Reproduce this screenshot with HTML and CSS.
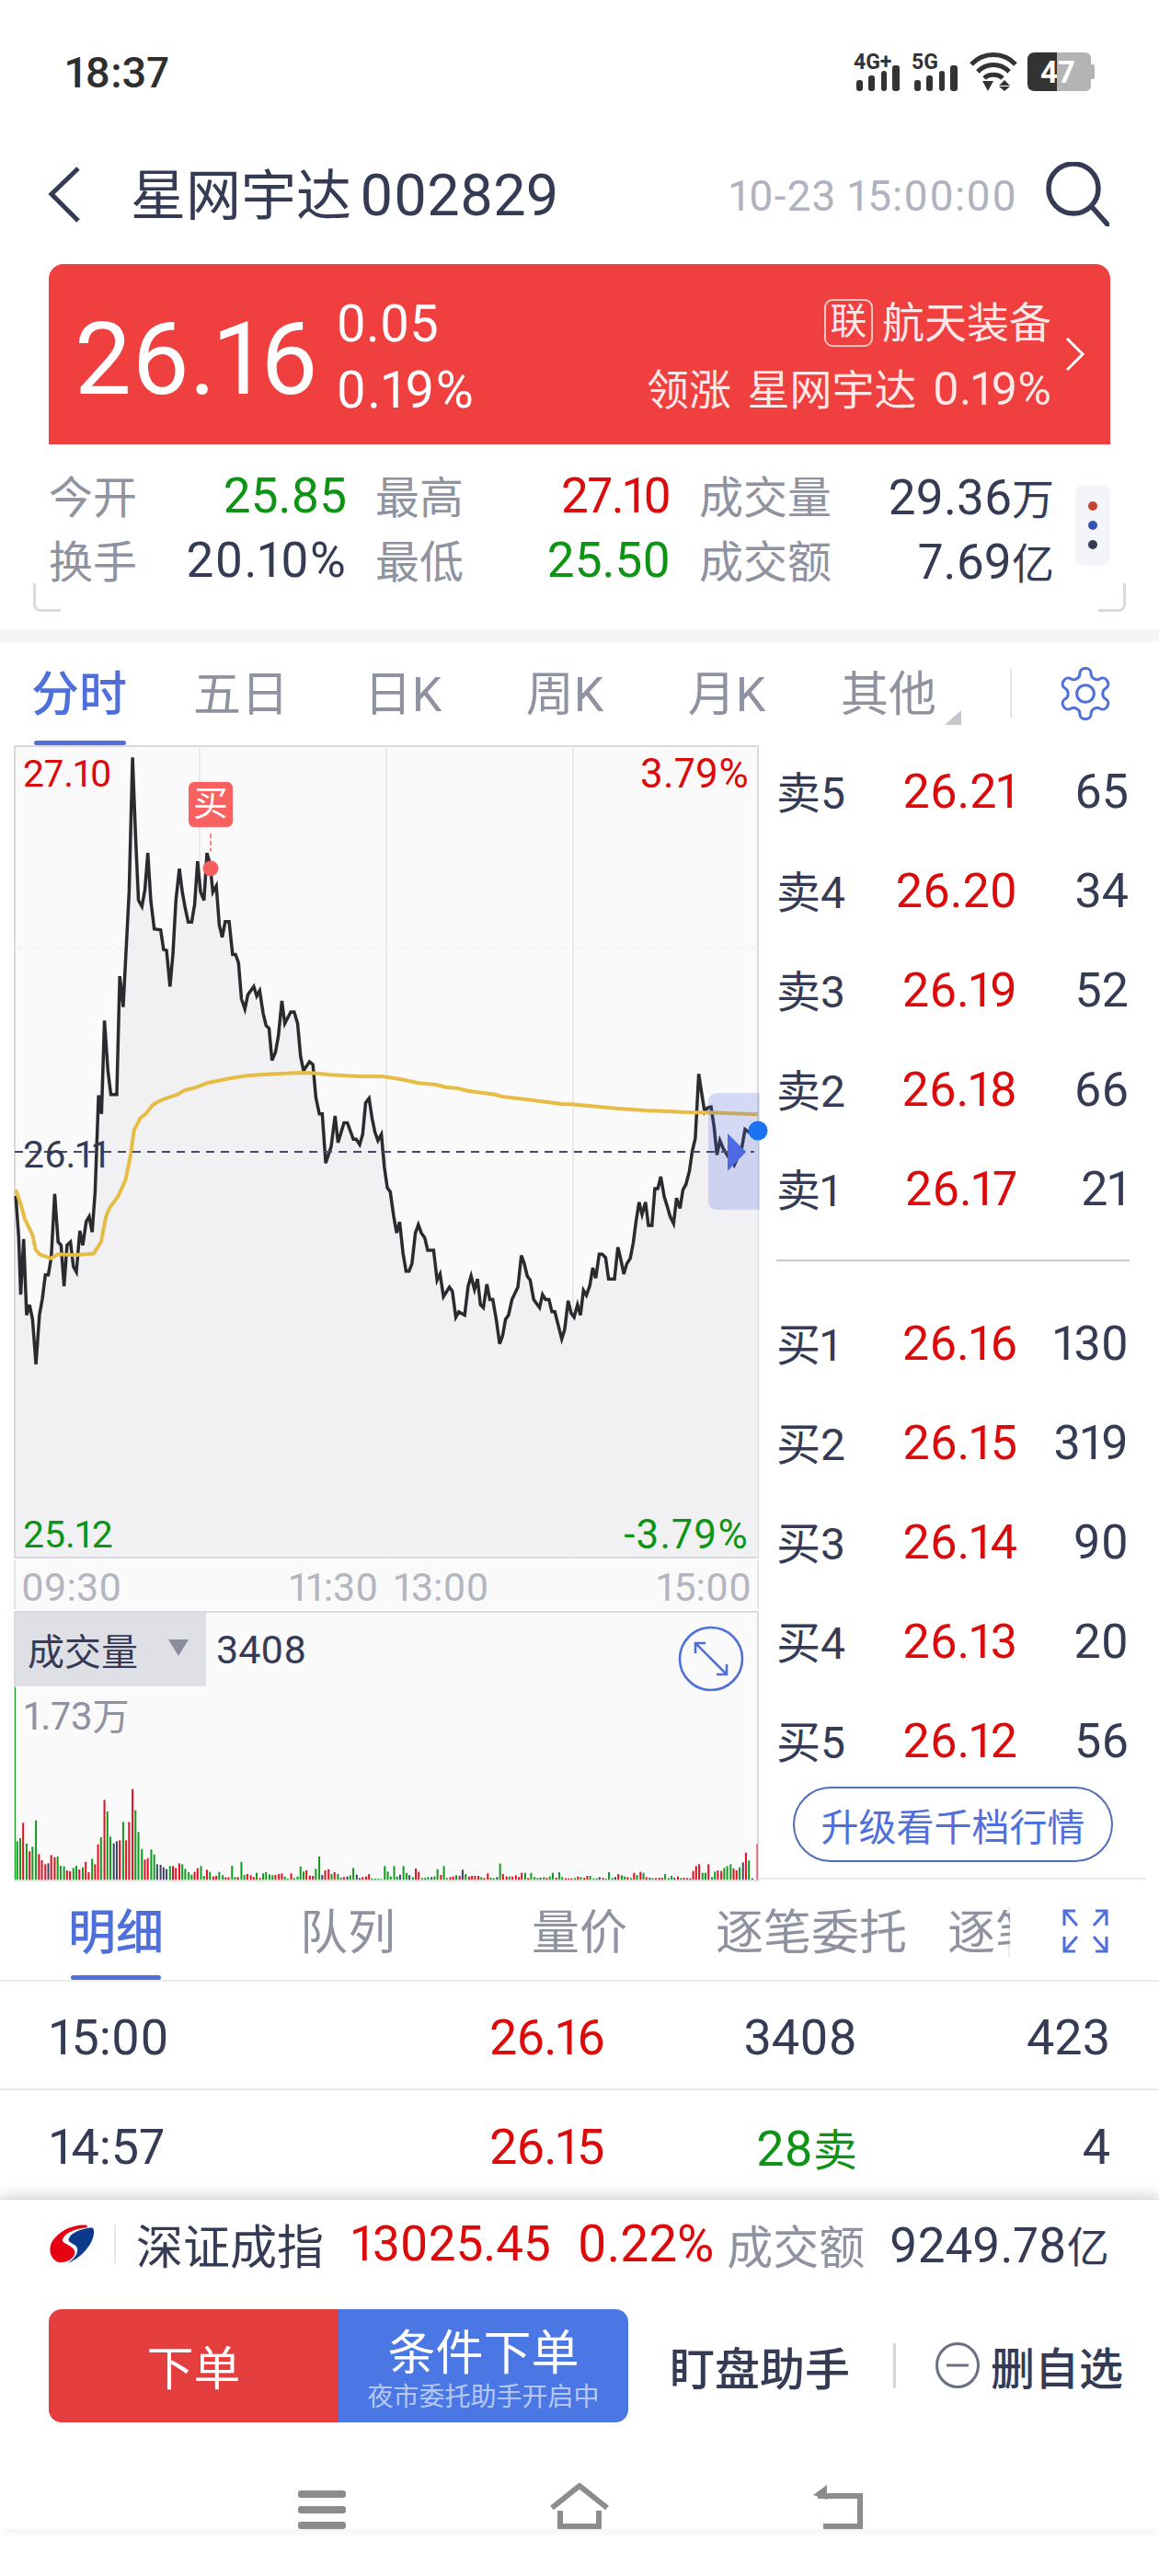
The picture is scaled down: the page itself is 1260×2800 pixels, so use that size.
FILE: index.html
```html
<!DOCTYPE html>
<html lang="zh-CN">
<head>
<meta charset="utf-8">
<title>星网宇达 002829</title>
<link rel="stylesheet" href="styles.css">
</head>
<body>
<div class="page">

<div class="status">
  <span class="clock">18:37</span>
  <div class="status-icons">
    <svg class="sig" width="52" height="42" viewBox="0 0 52 42"><text class="sig-text" x="0" y="18">4G+</text><rect x="3" y="30" width="7" height="12" rx="3"/><rect x="16" y="25" width="7" height="17" rx="3"/><rect x="30" y="20" width="6" height="22" rx="3"/><rect x="42" y="14" width="8" height="28" rx="3"/></svg>
    <svg class="sig" width="52" height="42" viewBox="0 0 52 42"><text class="sig-text" x="0" y="18">5G</text><rect x="3" y="30" width="7" height="12" rx="3"/><rect x="16" y="25" width="7" height="17" rx="3"/><rect x="30" y="20" width="6" height="22" rx="3"/><rect x="42" y="14" width="8" height="28" rx="3"/></svg>
    <svg class="wifi" width="52" height="42" viewBox="0 0 52 42"><path class="wifi-arc" d="M2 13C15 -1 37 -1 50 13"/><path class="wifi-arc" d="M9 21C18 11 34 11 43 21"/><path class="wifi-arc" d="M16 28C21 23 31 23 36 28"/><path class="wifi-fill" d="M14 31H26L20 42ZM38 30L44 36H32ZM32 37H44L38 42Z"/></svg>
    <svg class="batt" width="73" height="42" viewBox="0 0 73 42"><path class="batt-rest" d="M32 0H62Q69 0 69 6V13H71Q73 13 73 15V27Q73 29 71 29H69V36Q69 42 62 42H32Z"/><path class="batt-used" d="M8 0H32V42H8Q0 42 0 34V8Q0 0 8 0Z"/><text class="batt-text" x="14" y="33">47</text></svg>
  </div>
</div>

<header class="head">
  <svg class="back" width="36" height="63" viewBox="0 0 36 63"><path d="M33 3L4 31L33 60"/></svg>
  <h1 class="title">星网宇达<span class="code">002829</span></h1>
  <span class="stamp">10-23 15:00:00</span>
  <svg class="search" width="70" height="70" viewBox="0 0 70 70"><circle cx="31" cy="29" r="27"/><path d="M52 50L68 68"/></svg>
</header>

<section class="hero">
  <div class="hero-price">26.16</div>
  <div class="hero-chg"><div>0.05</div><div class="hero-pct">0.19%</div></div>
  <div class="hero-side">
    <div class="hero-line"><span class="tag">联</span>航天装备</div>
    <div class="hero-line hero-lead">领涨 星网宇达 <span class="lead-pct">0.19%</span></div>
  </div>
  <svg class="hero-arrow" width="22" height="38" viewBox="0 0 22 38"><path d="M2 2L19 19L2 36"/></svg>
</section>

<section class="stats">
  <div class="stats-grid">
    <div class="cell"><span class="lbl">今开</span><span class="val green">25.85</span></div>
    <div class="cell"><span class="lbl">最高</span><span class="val val-tight red">27.10</span></div>
    <div class="cell"><span class="lbl">成交量</span><span class="val">29.36<span class="unit">万</span></span></div>
    <div class="cell"><span class="lbl">换手</span><span class="val val-wide">20.10%</span></div>
    <div class="cell"><span class="lbl">最低</span><span class="val green">25.50</span></div>
    <div class="cell"><span class="lbl">成交额</span><span class="val">7.69<span class="unit">亿</span></span></div>
  </div>
  <div class="dots"><i class="dot dot-r"></i><i class="dot dot-b"></i><i class="dot dot-k"></i></div>
</section>
<div class="brackets"><i class="br br-l"></i><i class="br br-r"></i></div>
<div class="band"></div>

<nav class="tabs">
  <div class="tab-grid">
    <span class="tab on">分时</span><span class="tab">五日</span><span class="tab">日K</span><span class="tab">周K</span><span class="tab">月K</span><span class="tab more">其他</span>
  </div>
  <i class="tab-sep"></i>
  <svg class="gear" width="66" height="66" viewBox="0 0 24 24"><path d="M12.22 2h-.44a2 2 0 0 0-2 2v.18a2 2 0 0 1-1 1.73l-.43.25a2 2 0 0 1-2 0l-.15-.08a2 2 0 0 0-2.73.73l-.22.38a2 2 0 0 0 .73 2.73l.15.1a2 2 0 0 1 1 1.72v.51a2 2 0 0 1-1 1.74l-.15.09a2 2 0 0 0-.73 2.73l.22.38a2 2 0 0 0 2.73.73l.15-.08a2 2 0 0 1 2 0l.43.25a2 2 0 0 1 1 1.73V20a2 2 0 0 0 2 2h.44a2 2 0 0 0 2-2v-.18a2 2 0 0 1 1-1.73l.43-.25a2 2 0 0 1 2 0l.15.08a2 2 0 0 0 2.73-.73l.22-.39a2 2 0 0 0-.73-2.73l-.15-.08a2 2 0 0 1-1-1.74v-.5a2 2 0 0 1 1-1.74l.15-.09a2 2 0 0 0 .73-2.73l-.22-.38a2 2 0 0 0-2.73-.73l-.15.08a2 2 0 0 1-2 0l-.43-.25a2 2 0 0 1-1-1.73V4a2 2 0 0 0-2-2z"/><circle cx="12" cy="12" r="3.4"/></svg>
</nav>

<div class="market">
  <div class="charts">
    <div class="price-chart">
      <svg class="price-svg" width="810" height="882" viewBox="15 811 810 882">
        <path class="grid-v" d="M217 811V1693M420 811V1693M623 811V1693"/>
        <path class="grid-h" d="M16 1031H824"/>
        <g transform="translate(0 800) scale(.5357 .4464)">
          <polygon class="area" points="32,1998 32,1120 38,1220 42,1360 48,1225 54,1410 60,1385 66,1420 73,1530 80,1410 86,1370 92,1312 98,1312 104,1270 111,1115 118,1232 124,1240 130,1340 136,1240 143,1232 149,1292 155,1305 162,1205 168,1240 175,1182 181,1170 187,1208 193,1110 200,875 206,920 212,693 219,815 225,873 237,873 243,585 250,660 256,520 262,380 269,52 275,240 281,400 288,415 294,375 300,285 306,400 313,470 326,472 332,520 338,522 345,610 351,530 357,400 364,323 370,380 376,420 382,453 389,453 395,410 401,305 407,380 414,400 420,285 426,310 432,380 439,365 445,460 451,490 457,452 465,452 472,532 478,532 484,552 490,640 497,665 503,630 515,610 521,633 527,620 534,675 540,705 546,712 552,790 559,770 565,730 572,645 578,700 590,672 597,672 604,700 610,780 616,815 628,793 635,800 641,880 648,920 654,920 661,1040 672,1000 680,925 686,990 698,942 705,942 717,982 723,982 730,995 736,970 742,893 749,882 755,930 761,965 767,985 774,970 780,1050 786,1100 792,1110 799,1170 805,1210 811,1183 818,1260 824,1303 830,1303 836,1285 843,1210 849,1190 855,1210 862,1222 868,1252 880,1252 887,1325 893,1310 900,1365 912,1342 918,1352 925,1415 931,1402 943,1410 950,1340 956,1315 963,1348 969,1322 975,1385 981,1392 988,1335 994,1372 1000,1372 1007,1420 1014,1480 1020,1460 1026,1420 1032,1410 1039,1372 1051,1342 1058,1265 1064,1285 1070,1315 1076,1325 1083,1372 1095,1392 1101,1360 1107,1372 1114,1372 1120,1402 1126,1402 1140,1468 1146,1445 1153,1375 1159,1405 1165,1415 1172,1385 1178,1410 1184,1350 1190,1362 1197,1338 1203,1295 1209,1320 1216,1262 1222,1262 1229,1270 1235,1322 1247,1322 1254,1245 1260,1275 1266,1310 1272,1285 1279,1272 1285,1235 1291,1180 1297,1135 1303,1165 1310,1135 1316,1192 1323,1192 1329,1102 1335,1102 1341,1073 1348,1122 1354,1145 1360,1170 1367,1187 1373,1125 1380,1150 1386,1105 1392,1092 1399,1060 1405,1010 1411,980 1418,823 1424,870 1430,915 1436,905 1443,903 1449,950 1455,1020 1461,985 1468,1005 1478,1025 1490,1045 1505,1005 1512,958 1520,965 1538,962 1538,1998"/>
          <polyline class="price" points="32,1120 38,1220 42,1360 48,1225 54,1410 60,1385 66,1420 73,1530 80,1410 86,1370 92,1312 98,1312 104,1270 111,1115 118,1232 124,1240 130,1340 136,1240 143,1232 149,1292 155,1305 162,1205 168,1240 175,1182 181,1170 187,1208 193,1110 200,875 206,920 212,693 219,815 225,873 237,873 243,585 250,660 256,520 262,380 269,52 275,240 281,400 288,415 294,375 300,285 306,400 313,470 326,472 332,520 338,522 345,610 351,530 357,400 364,323 370,380 376,420 382,453 389,453 395,410 401,305 407,380 414,400 420,285 426,310 432,380 439,365 445,460 451,490 457,452 465,452 472,532 478,532 484,552 490,640 497,665 503,630 515,610 521,633 527,620 534,675 540,705 546,712 552,790 559,770 565,730 572,645 578,700 590,672 597,672 604,700 610,780 616,815 628,793 635,800 641,880 648,920 654,920 661,1040 672,1000 680,925 686,990 698,942 705,942 717,982 723,982 730,995 736,970 742,893 749,882 755,930 761,965 767,985 774,970 780,1050 786,1100 792,1110 799,1170 805,1210 811,1183 818,1260 824,1303 830,1303 836,1285 843,1210 849,1190 855,1210 862,1222 868,1252 880,1252 887,1325 893,1310 900,1365 912,1342 918,1352 925,1415 931,1402 943,1410 950,1340 956,1315 963,1348 969,1322 975,1385 981,1392 988,1335 994,1372 1000,1372 1007,1420 1014,1480 1020,1460 1026,1420 1032,1410 1039,1372 1051,1342 1058,1265 1064,1285 1070,1315 1076,1325 1083,1372 1095,1392 1101,1360 1107,1372 1114,1372 1120,1402 1126,1402 1140,1468 1146,1445 1153,1375 1159,1405 1165,1415 1172,1385 1178,1410 1184,1350 1190,1362 1197,1338 1203,1295 1209,1320 1216,1262 1222,1262 1229,1270 1235,1322 1247,1322 1254,1245 1260,1275 1266,1310 1272,1285 1279,1272 1285,1235 1291,1180 1297,1135 1303,1165 1310,1135 1316,1192 1323,1192 1329,1102 1335,1102 1341,1073 1348,1122 1354,1145 1360,1170 1367,1187 1373,1125 1380,1150 1386,1105 1392,1092 1399,1060 1405,1010 1411,980 1418,823 1424,870 1430,915 1436,905 1443,903 1449,950 1455,1020 1461,985 1468,1005 1478,1025 1490,1045 1505,1005 1512,958 1520,965 1538,962"/>
          <polyline class="avg" points="32,1105 42,1140 50,1175 66,1215 72,1250 80,1262 104,1272 118,1262 150,1264 190,1260 205,1232 215,1170 222,1150 240,1120 255,1080 265,1020 272,960 285,930 296,920 310,898 330,885 360,873 375,862 395,857 420,845 460,835 500,827 550,823 610,820 640,821 670,825 730,829 775,829 810,835 850,845 885,849 905,855 930,858 950,864 1005,873 1020,878 1090,888 1140,896 1165,897 1255,907 1310,912 1410,917 1440,917 1538,921"/>
        </g>
        <path class="ref" d="M16 1252H820"/>
        <path class="panel" d="M826 1188H780Q770 1188 770 1198V1305Q770 1315 780 1315H826Z"/>
        <path class="panel-arrow" d="M791 1232L811 1252L791 1273Z"/>
        <circle class="now" cx="824" cy="1229" r="10.5"/>
        <path class="trade-line" d="M229 906V925"/>
        <circle class="trade-dot" cx="229" cy="944" r="8.5"/>
      </svg>
      <span class="tick tick-tl red">27.10</span>
      <span class="tick tick-tr red">3.79%</span>
      <span class="tick tick-mid">26.11</span>
      <span class="tick tick-bl green">25.12</span>
      <span class="tick tick-br green">-3.79%</span>
      <span class="trade-tag">买</span>
    </div>
    <div class="axis"><span>09:30</span><span class="axis-mid"><span>11:30</span><span>13:00</span></span><span>15:00</span></div>
    <div class="vol">
      <div class="vol-head">
        <div class="vol-pick">成交量<i class="vol-caret"></i></div>
        <span class="vol-now">3408</span>
        <svg class="vol-expand" width="72" height="72" viewBox="0 0 72 72"><circle cx="36" cy="36" r="34"/><path d="M19 19L53 53M19 30V19H30M53 42V53H42"/></svg>
      </div>
      <div class="vol-plot">
        <svg id="volbars" class="vol-svg" width="810" height="210" viewBox="15 1833 810 210"></svg>
        <span class="vol-max">1.73<span class="vol-unit">万</span></span>
      </div>
    </div>
  </div>
  <aside class="book">
    <div class="row"><span class="side">卖5</span><span class="px">26.21</span><span class="qty">65</span></div>
    <div class="row"><span class="side">卖4</span><span class="px">26.20</span><span class="qty">34</span></div>
    <div class="row"><span class="side">卖3</span><span class="px">26.19</span><span class="qty">52</span></div>
    <div class="row"><span class="side">卖2</span><span class="px">26.18</span><span class="qty">66</span></div>
    <div class="row"><span class="side">卖1</span><span class="px">26.17</span><span class="qty">21</span></div>
    <div class="book-sep"></div>
    <div class="row"><span class="side">买1</span><span class="px">26.16</span><span class="qty">130</span></div>
    <div class="row"><span class="side">买2</span><span class="px">26.15</span><span class="qty">319</span></div>
    <div class="row"><span class="side">买3</span><span class="px">26.14</span><span class="qty">90</span></div>
    <div class="row"><span class="side">买4</span><span class="px">26.13</span><span class="qty">20</span></div>
    <div class="row"><span class="side">买5</span><span class="px">26.12</span><span class="qty">56</span></div>
    <button class="upgrade">升级看千档行情</button>
    <div class="book-end"></div>
  </aside>
</div>

<nav class="sub">
  <div class="sub-tabs">
    <span class="sub-tab on">明细</span><span class="sub-tab">队列</span><span class="sub-tab">量价</span><span class="sub-tab">逐笔委托</span><span class="sub-tab sub-clip">逐笔成交</span>
  </div>
  <svg class="sub-expand" width="50" height="48" viewBox="0 0 50 48"><path d="M2 18V2H14M2 2L16 18M48 18V2H36M48 2L34 18M2 30V46H14M2 46L16 30M48 30V46H36M48 46L34 30"/></svg>
</nav>

<div class="deals">
  <div class="deal"><span>15:00</span><span class="deal-px red">26.16</span><span class="num">3408</span><span class="num">423</span></div>
  <div class="deal"><span>14:57</span><span class="deal-px red">26.15</span><span class="num green">28<span class="deal-unit">卖</span></span><span class="num">4</span></div>
</div>

<div class="bottom">
  <div class="quote">
    <svg class="logo" width="50" height="44" viewBox="40 35 150 132"><path class="logo-r" d="M165 40C120 35 70 60 50 95C38 120 45 150 70 160C95 165 125 150 125 128C125 110 95 105 85 92C85 70 120 52 165 48Z"/><path class="logo-b" d="M180 48C190 50 190 70 180 92C170 115 140 150 100 165C125 150 137 130 133 115C128 100 108 100 104 88C108 68 140 52 180 48Z"/></svg>
    <i class="quote-sep"></i>
    <span class="q-name">深证成指</span>
    <span class="q-val red">13025.45</span>
    <span class="q-pct red">0.22%</span>
    <span class="q-lbl">成交额</span>
    <span class="q-amt">9249.78<span class="unit">亿</span></span>
  </div>
  <div class="actions">
    <div class="trade">
      <div class="btn-buy">下单</div>
      <div class="btn-cond"><span class="cond-main">条件下单</span><span class="cond-sub">夜市委托助手开启中</span></div>
    </div>
    <span class="watch">盯盘助手</span>
    <i class="act-sep"></i>
    <svg class="minus" width="48" height="50" viewBox="0 0 48 50"><ellipse cx="24" cy="25" rx="22.5" ry="23.5"/><path d="M12 25H36"/></svg>
    <span class="remove">删自选</span>
  </div>
  <div class="navbar">
    <svg class="nav-menu" width="52" height="42" viewBox="0 0 52 42"><rect y="0" width="52" height="8" rx="3"/><rect y="17" width="52" height="8" rx="3"/><rect y="34" width="52" height="8" rx="3"/></svg>
    <svg class="nav-home" width="66" height="50" viewBox="0 0 66 50"><path d="M3 27L33 3L63 27M12 30V47H54V30"/></svg>
    <svg class="nav-back" width="56" height="48" viewBox="0 0 56 48"><path class="nav-stroke" d="M6 12H52V45H12"/><path class="nav-head" d="M16 0L1 11L16 16Z"/></svg>
  </div>
</div>

</div>
<script src="chart.js"></script>
</body>
</html>
```

FILE: styles.css
```css
* { box-sizing: border-box; }
html, body { margin: 0; padding: 0; background: #fff; }
body { font-family: Roboto, "Noto Sans CJK SC", sans-serif; color: #353b55; font-variant-numeric: proportional-nums; }
.page { width: 1260px; height: 2800px; overflow: hidden; position: relative; background: #fff; }
.red { color: #dc0a0a; }
.green { color: #0d9414; }
.unit { font-size: 46px; }

/* status */
.status { height: 156px; display: flex; align-items: center; justify-content: space-between; padding: 0 70px 0 71px; }
.clock { font-size: 47px; font-weight: 500; color: #2e2e2e; }
.status-icons { display: flex; gap: 11px; align-items: center; }
.status-icons svg { display: block; overflow: visible; }
.sig rect { fill: #333; }
.sig-text { font: 700 23px Roboto, sans-serif; fill: #333; }
.wifi-arc { fill: none; stroke: #333; stroke-width: 5; }
.wifi-fill { fill: #333; }
.batt-rest { fill: #b4b4b4; }
.batt-used { fill: #333; }
.batt-text { font: 700 33px Roboto, sans-serif; fill: #fff; }

/* header */
.head { height: 110px; margin-bottom: 21px; display: flex; align-items: center; padding: 0 54px 0 52px; }
.back { fill: none; stroke: #353b55; stroke-width: 5; margin-right: 54px; }
.title { margin: 3px 0 0; font-size: 60px; font-weight: 400; line-height: 1; color: #353b55; }
.code { font-size: 63px; margin-left: 9px; }
.stamp { margin: 4px 30px 0 auto; font-size: 46px; color: #b0b3bf; letter-spacing: 1.1px; }
.search { fill: none; stroke: #353b55; stroke-width: 5.5; stroke-linecap: round; }

/* hero */
.hero { height: 196px; margin: 0 53px; padding: 0 27px 0 28px; background: #ef3f3f; border-radius: 16px 16px 0 0; display: flex; align-items: center; color: #fff; }
.hero-price { font-size: 110px; line-height: 1; margin-top: 12px; }
.hero-chg { margin-left: 20px; font-size: 56px; line-height: 72px; margin-top: 6px; }
.hero-pct { letter-spacing: 1.2px; }
.hero-side { margin-left: auto; display: flex; flex-direction: column; align-items: flex-end; margin-top: 4px; }
.hero-line { font-size: 46px; line-height: 72px; display: flex; align-items: center; color: rgba(255,255,255,.88); }
.hero-lead { display: block; word-spacing: 6px; }
.lead-pct { font-size: 50px; }
.tag { width: 53px; height: 52px; border: 2px solid rgba(255,255,255,.7); border-radius: 9px; font-size: 40px; line-height: 46px; text-align: center; margin-right: 10px; }
.hero-arrow { fill: none; stroke: #fff; stroke-width: 3; margin-left: 15px; }

/* stats */
.stats { display: flex; padding: 21px 53px 0 53px; align-items: flex-start; height: 151px; }
.stats-grid { display: grid; grid-template-columns: 324px 321px 386px; column-gap: 31px; width: 1093px; }
.cell { display: flex; justify-content: space-between; align-items: center; height: 70px; }
.lbl { font-size: 48px; color: #8f92a0; margin-top: -4px; }
.val { font-size: 53px; }
.val-tight { letter-spacing: -1.2px; }
.val-wide { letter-spacing: 1.2px; }
.dots { margin: 23px 0 0 23px; width: 38px; height: 88px; background: #f4f5f8; border-radius: 8px; display: flex; flex-direction: column; align-items: center; justify-content: center; gap: 11px; }
.dot { width: 10px; height: 10px; border-radius: 50%; }
.dot-r { background: #c8432f; }
.dot-b { background: #3a53b0; }
.dot-k { background: #353b55; }
.brackets { display: flex; justify-content: space-between; height: 50px; padding: 0 36px; }
.br { width: 30px; height: 31px; border-bottom: 3px solid #d8dae0; }
.br-l { border-left: 3px solid #d8dae0; border-bottom-left-radius: 8px; }
.br-r { border-right: 3px solid #d8dae0; border-bottom-right-radius: 8px; }
.band { height: 14px; background: #f4f5f7; }

/* tabs */
.tabs { height: 112px; display: flex; align-items: flex-start; position: relative; }
.tab-grid { display: grid; grid-template-columns: repeat(6, 176px); width: 1056px; margin-left: -2px; }
.tab { position: relative; height: 112px; padding-top: 30px; text-align: center; font-size: 52px; line-height: 56px; color: #8f92a0; }
.tab.on { color: #4f6fdb; font-weight: 500; }
.tab.on::after { content: ""; position: absolute; left: 39px; width: 100px; bottom: 0; height: 5px; background: #4f6fdb; border-radius: 3px; }
.more::after { content: ""; position: absolute; right: 9px; top: 74px; border-style: solid; border-width: 0 0 16px 18px; border-color: transparent transparent #c5c7cf transparent; }
.tab-sep { width: 2px; height: 53px; background: #e3e4e8; margin: 29px 0 0 44px; }
.gear { fill: none; stroke: #4f6fdb; stroke-width: 1.1; margin: 23px 0 0 47px; flex: none; }

/* market */
.market { display: flex; }
.charts { margin-left: 15px; width: 810px; }
.price-chart { position: relative; height: 884px; background: #fafafa; border: 2px solid #d9dae0; }
.price-svg { position: absolute; left: -2px; top: -1px; overflow: visible; display: block; }
.grid-v { stroke: #e4e4e6; stroke-width: 1.5; fill: none; }
.grid-h { stroke: #f0f0f1; stroke-width: 1.5; stroke-dasharray: 8 8; fill: none; }
.area { fill: #f1f1f4; }
.price { fill: none; stroke: #2b2b2f; stroke-width: 3.5; vector-effect: non-scaling-stroke; stroke-linejoin: miter; }
.avg { fill: none; stroke: #e6bc44; stroke-width: 4; vector-effect: non-scaling-stroke; }
.ref { stroke: #444a66; stroke-width: 2; stroke-dasharray: 9 7; fill: none; }
.panel { fill: rgba(79,105,220,.22); }
.panel-arrow { fill: #4f6be4; }
.now { fill: #1a73f0; }
.trade-line { stroke: #f75d5d; stroke-width: 1.5; stroke-dasharray: 5 3; fill: none; }
.trade-dot { fill: #f75d5d; }
.tick { position: absolute; font-size: 41px; line-height: 40px; }
.tick-tl { left: 8px; top: 9px; }
.tick-tr { right: 9px; top: 9px; font-size: 44px; letter-spacing: .3px; }
.tick-mid { left: 8px; top: 423px; }
.tick-bl { left: 8px; bottom: 4px; }
.tick-br { right: 9px; bottom: 4px; font-size: 44px; letter-spacing: 1.2px; }
.trade-tag { position: absolute; left: 188px; top: 38px; width: 48px; height: 49px; background: #f96060; color: #fff; border-radius: 6px; font-size: 38px; line-height: 47px; text-align: center; }
.axis { margin-top: 2px; height: 53px; background: #fafafa; border: solid #e2e3e8; border-width: 0 2px; padding: 4px 6px 0 6px; display: flex; justify-content: space-between; align-items: center; font-size: 43px; color: #b3b5c1; }
.axis-mid { display: flex; gap: 17px; }
.vol { margin-top: 2px; height: 294px; background: #fafafa; border: 2px solid #d9dae0; border-bottom-color: #dfe0e5; display: flex; flex-direction: column; }
.vol-head { height: 80px; display: flex; align-items: center; flex: none; }
.vol-pick { width: 207px; height: 80px; background: #dfe0e5; display: flex; align-items: center; font-size: 40px; padding-left: 13px; }
.vol-caret { width: 0; height: 0; margin-left: 33px; margin-top: -5px; border-style: solid; border-width: 18px 11px 0; border-color: #8a8d9b transparent transparent; }
.vol-now { margin-left: 11px; font-size: 43px; }
.vol-expand { fill: none; stroke: #4f6fdb; stroke-width: 2.6; margin-left: auto; margin-right: 14px; margin-top: 20px; }
.vol-plot { position: relative; flex: 1; }
.vol-svg { position: absolute; left: -2px; top: 0; display: block; }
.vol-max { position: absolute; left: 9px; top: 8px; font-size: 42px; line-height: 50px; color: #8f92a0; }
.vol-unit { font-size: 40px; }
.bar-g { fill: #119a1e; }
.bar-r { fill: #e01020; }
.bar-d { fill: #3c4260; }

/* order book */
.book { width: 435px; padding-left: 22px; margin-top: -4px; }
.row { height: 108px; display: grid; grid-template-columns: 100px 159px 121px; align-items: center; font-size: 52px; }
.side { font-size: 48px; display: flex; white-space: nowrap; margin: -5px 0 0 -3px; }
.px { text-align: right; color: #dc0a0a; }
.qty { text-align: right; }
.book-sep { width: 384px; height: 2px; margin: 23px 0 35px -3px; background: #c8cad2; }
.upgrade { display: block; margin: -4px 0 0 15px; width: 348px; height: 82px; border: 2px solid #4f6fb8; border-radius: 41px; background: #fff; color: #4f6fdb; font: 400 41px Roboto, "Noto Sans CJK SC", sans-serif; padding: 0; }
.book-end { margin: 17px 0 0 -22px; width: 421px; height: 2px; background: #e8e9ec; }

/* sub tabs */
.sub { display: flex; height: 109px; border-bottom: 2px solid #e8e9ec; position: relative; }
.sub::before { content: ""; position: absolute; left: 77px; bottom: 0; width: 98px; height: 5px; background: #4f6fdb; border-radius: 3px; }
.sub-tabs { display: grid; grid-template-columns: repeat(4, 252px) 90px; width: 1098px; border-right: 2px solid #eceded; flex: none; height: 56px; margin-top: 27px; padding-top: 4px; }
.sub-tab { text-align: center; font-size: 52px; line-height: 52px; color: #8f92a0; white-space: nowrap; }
.sub-tab.on { color: #4f6fdb; font-weight: 500; }
.sub-clip { text-align: left; padding-left: 22px; overflow: hidden; }
.sub-expand { fill: none; stroke: #4f6fdb; stroke-width: 3; margin: 30px 0 0 57px; }

/* deals */
.deals { height: 236px; }
.deal { height: 118px; border-bottom: 2px solid #e8e9ec; display: grid; grid-template-columns: 478px 150px 250px 275px; align-items: center; padding: 4px 0 0 54px; font-size: 54px; }
.deal:last-child { border-bottom: 0; }
.deal-px { letter-spacing: -1px; }
.deal-unit { font-size: 48px; }
.num { text-align: right; }

/* bottom */
.bottom { position: relative; background: #fff; box-shadow: 0 -4px 14px rgba(0,0,0,.16); border-top: 1px solid #dcdcdc; }
.quote { height: 110px; padding: 0 0 14px 53px; display: flex; align-items: center; white-space: nowrap; }
.logo { flex: none; }
.logo-b { fill: #0b3a8c; }
.logo-r { fill: #e60012; }
.quote-sep { width: 2px; height: 42px; background: #e6e7ea; margin: 0 22px 0 21px; }
.q-name { font-size: 51px; }
.q-val { margin-left: 30px; font-size: 53px; }
.q-pct { margin-left: 29px; font-size: 55px; }
.q-lbl { margin-left: 14px; color: #8f92a0; font-size: 50px; }
.q-amt { margin-left: 27px; font-size: 53px; }
.actions { height: 134px; display: flex; align-items: center; padding: 6px 0 0 53px; }
.trade { width: 630px; height: 123px; display: flex; border-radius: 14px; overflow: hidden; color: #fff; }
.btn-buy { width: 315px; background: #e53e3e; display: flex; align-items: center; justify-content: center; font-size: 51px; }
.btn-cond { width: 315px; background: #4a77e4; padding-top: 12px; display: flex; flex-direction: column; align-items: center; justify-content: center; }
.cond-main { font-size: 52px; line-height: 56px; }
.cond-sub { font-size: 28px; line-height: 34px; margin-top: 2px; color: rgba(255,255,255,.62); }
.watch { font-size: 49px; margin-left: 45px; font-weight: 500; }
.act-sep { width: 3px; height: 49px; background: #d5d7dc; margin: 0 43px 0 47px; }
.minus { fill: none; stroke: #6a6f85; stroke-width: 3; flex: none; }
.remove { font-size: 48px; margin-left: 12px; font-weight: 500; }
.navbar { display: flex; align-items: flex-end; height: 114px; }
.nav-menu { fill: #8c8c8c; margin-left: 324px; }
.nav-home { fill: none; stroke: #8c8c8c; stroke-width: 6; margin-left: 221px; }
.nav-back { margin-left: 220px; }
.nav-stroke { fill: none; stroke: #8c8c8c; stroke-width: 6; }
.nav-head { fill: #8c8c8c; }
```

FILE: chart.js
```javascript
var data = "35g125 41g135 47r185 54g117 60r92 66g107 73g193 79r83 85r63 92r50 98d53 104r80 111r73 117g75 123g45 130g43 136r30 142r27 149g38 155g45 161r33 168g40 174r58 180r24 187g68 193r50 199r115 205g138 212r260 218g222 224g140 231d118 237d125 243r128 250g188 256r128 262r188 269r295 275g226 281g155 288g100 294r65 300r70 307g98 313g82 319d50 326d48 332d40 338d34 345g44 351r44 357r38 364r53 370g50 376g35 383g24 389g16 395r25 401r37 408g44 414g12 420r32 426g25 433r10 439r12 445g25 452g14 458r7 464r8 471g45 477g8 483r8 490g58 496g15 502r18 509r14 515r8 521g22 528r5 534g20 540g24 547g17 553g14 559r15 566r18 572r20 578g10 584g3 591r20 597g5 604g10 610g43 616g26 622r30 629r13 635r12 641g35 648g75 654d15 660r30 667r34 673g18 679r24 686g18 692g6 698r8 705d10 711g14 717g38 724d16 730d5 736r8 743r10 749r18 755g4 762g3 768g3 774g2 781g44 787g26 793g10 800g44 806g10 812d16 819g44 825g22 831d14 838g8 844r36 850r25 857g5 863g6 869g8 876d8 882g10 888g34 895r15 901g44 907g5 914r8 920r10 926g14 933r12 939d32 945g18 952r10 958r12 964r12 971r12 977g8 983r5 990r20 996g6 1002g5 1009d8 1015g52 1021r18 1028r10 1034g10 1040r10 1047r14 1053r8 1059r22 1066g22 1072r5 1078g22 1085g8 1091g5 1097d6 1104g8 1110r5 1116g10 1122g22 1129r6 1135g24 1141g8 1148r4 1154r4 1160r4 1167g5 1173r10 1179g8 1186r6 1192r12 1198g12 1205g4 1211g4 1217d8 1224r6 1230g3 1236g24 1243g5 1249d8 1255r18 1262g14 1268g10 1274r8 1281g5 1287r22 1293g15 1300r25 1306g22 1312r8 1319d6 1325g4 1331r5 1338r6 1344r6 1350g18 1357g5 1363g12 1369d6 1376r10 1382g5 1388r6 1395r5 1401d4 1407r28 1413r44 1419r50 1426g22 1432g22 1438r50 1445g8 1451g26 1457r30 1464r28 1470g38 1476g44 1483g50 1489r36 1495r30 1501g40 1508d56 1514r88 1520g62 1527d4";
var svg = document.getElementById("volbars");
var base = 2043;
function bar(x, w, h, cls) {
  var r = document.createElementNS("http://www.w3.org/2000/svg", "rect");
  r.setAttribute("x", x);
  r.setAttribute("y", base - h);
  r.setAttribute("width", w);
  r.setAttribute("height", h);
  r.setAttribute("class", cls);
  svg.appendChild(r);
}
bar(16, 1, 209, "bar-g");
data.split(" ").forEach(function (t) {
  var m = t.match(/^(\d+)([grd])(\d+)$/);
  bar(+m[1] / 1.867 - 1, 2, +m[3] / 3, "bar-" + m[2]);
});
bar(822.5, 1, 39, "bar-r");
```
